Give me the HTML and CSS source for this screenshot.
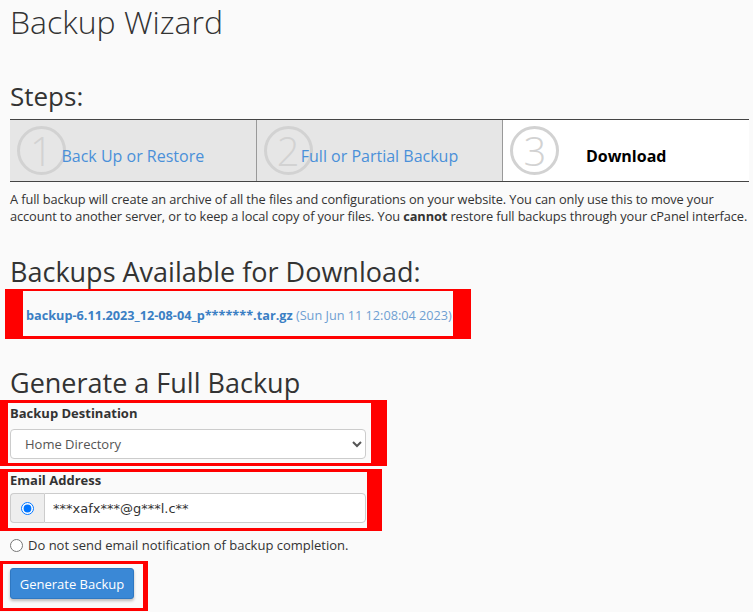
FILE: index.html
```html
<!doctype html>
<html lang="en">
<head>
    <meta charset="UTF-8">
    <title>Backup Wizard</title>
    <link rel="stylesheet" href="styles.css">
</head>
<body>
    <h1 class="page-title">Backup Wizard</h1>

    <h2 class="section-title steps-title">Steps:</h2>
    <!--步骤条-->
    <div class="steps">
        <div class="step">
            <span class="step-num">1</span>
            <a class="step-link" href="#">Back Up or Restore</a>
        </div>
        <div class="step">
            <span class="step-num">2</span>
            <a class="step-link" href="#">Full or Partial Backup</a>
        </div>
        <div class="step step-current">
            <span class="step-num">3</span>
            <span class="step-label">Download</span>
        </div>
    </div>

    <p class="intro">A full backup will create an archive of all the files and configurations on your website. You can only use this to move your account to another server, or to keep a local copy of your files. You <b>cannot</b> restore full backups through your cPanel interface.</p>

    <h2 class="section-title big-title">Backups Available for Download:</h2>
    <div class="mark mark-list">
        <a class="backup-file" href="#">backup-6.11.2023_12-08-04_p*******.tar.gz</a>
        <span class="backup-date">(Sun Jun 11 12:08:04 2023)</span>
    </div>

    <h2 class="section-title big-title gen-title">Generate a Full Backup</h2>
    <div class="mark mark-dest">
        <label class="field-label" for="dest">Backup Destination</label>
        <select class="field-select" id="dest">
            <option>Home Directory</option>
        </select>
    </div>

    <div class="mark mark-email">
        <label class="field-label" for="email">Email Address</label>
        <div class="input-group">
            <span class="input-addon"><input type="radio" name="notify" checked></span>
            <input class="field-input" id="email" type="text" value="***xafx***@g***l.c**">
        </div>
    </div>

    <label class="no-mail"><input type="radio" name="notify"> Do not send email notification of backup completion.</label>

    <div class="mark mark-btn">
        <button class="btn-primary" type="button">Generate Backup</button>
    </div>
</body>
</html>
```

FILE: styles.css
```css
body{
    margin: 0;
    padding: 0 0 0 10px;
    background: #fafafa;
    color: #333;
    font-family: "Open Sans", "Liberation Sans", sans-serif;
    font-size: 13px;
}
a{
    text-decoration: none;
}
/*标题*/
.page-title{
    margin: 0;
    padding-top: 1px;
    font-size: 32px;
    font-weight: 300;
    line-height: 42px;
}
.section-title{
    margin: 0;
    font-size: 26px;
    font-weight: 400;
    line-height: 34px;
}
.big-title{
    font-size: 27px;
}
.steps-title{
    margin-top: 36px;
    margin-bottom: 6px;
}

/*步骤条*/
.steps{
    display: flex;
    width: 739px;
    height: 61px;
    border-top: 1px solid #444;
    border-bottom: 1px solid #444;
}
.step{
    flex: 1;
    position: relative;
    display: flex;
    align-items: center;
    justify-content: center;
    background: #e6e6e6;
    border-left: 1px solid #999;
    font-size: 16px;
}
.step:first-child{
    border-left: 0;
}
.step-current{
    background: #fff;
}
/*圆圈数字,在文字下面*/
.step-num{
    position: absolute;
    left: 7px;
    top: 6px;
    width: 43px;
    height: 43px;
    border: 3px solid #d2d2d2;
    border-radius: 50%;
    color: #d2d2d2;
    font-size: 40px;
    font-weight: 300;
    line-height: 43px;
    text-align: center;
}
.step-link,
.step-label{
    position: relative;
    padding-top: 10px;
}
.step-link{
    color: #4a90d9;
}
.step-label{
    color: #000;
    font-weight: 700;
}

.intro{
    margin: 9px 0 30px;
    width: 740px;
    font-size: 12.8px;
    line-height: 17px;
    letter-spacing: -0.1px;
}

/*红框*/
.mark{
    border: 0 solid #f00;
    box-sizing: border-box;
}
.mark-list{
    margin-left: -5px;
    width: 466px;
    height: 50px;
    border-width: 2px 18px 3px 18px;
    padding: 15px 0 0 3px;
    background: #fafafa;
    font-size: 12.7px;
    white-space: nowrap;
}
.backup-file{
    color: #3b7fc4;
    font-weight: 700;
}
.backup-date{
    color: #6f9fd2;
}

.gen-title{
    margin-top: 27px;
}
.mark-dest{
    margin-left: -10px;
    width: 387px;
    height: 66px;
    border-width: 3px 16px 3px 8px;
    padding: 0 0 0 2px;
}
.mark-email{
    margin-left: -10px;
    margin-top: 3px;
    width: 382px;
    height: 62px;
    border-width: 3px 15px 3px 8px;
    padding: 0 0 0 2px;
}
.field-label{
    display: block;
    font-weight: 700;
    line-height: 20px;
    margin-bottom: 6px;
}
.mark-email .field-label{
    line-height: 16px;
    margin-bottom: 5px;
}
.field-select{
    display: block;
    width: 356px;
    height: 30px;
    padding: 0 10px;
    border: 1px solid #ccc;
    border-radius: 4px;
    background: #fff;
    color: #555;
    font-family: inherit;
    font-size: 13px;
}
.input-group{
    display: flex;
    width: 356px;
    height: 30px;
}
.input-addon{
    display: flex;
    align-items: center;
    justify-content: center;
    width: 33px;
    border: 1px solid #ccc;
    border-right: 0;
    border-radius: 4px 0 0 4px;
    background: #eee;
}
.input-addon input{
    margin: 0;
}
.field-input{
    flex: 1;
    min-width: 0;
    border: 1px solid #ccc;
    border-radius: 0 4px 4px 0;
    background: #fff;
    padding: 0 8px;
    color: #333;
    font-family: "DejaVu Sans", sans-serif;
    font-size: 13px;
}
.no-mail{
    display: flex;
    align-items: center;
    gap: 5px;
    margin-top: 6px;
    height: 16px;
}
.no-mail input{
    margin: 0;
}
.mark-btn{
    margin-left: -10px;
    margin-top: 8px;
    width: 148px;
    height: 50px;
    border-width: 3px 5px 3px 3px;
    padding: 4px 0 0 7px;
}
.btn-primary{
    width: 124px;
    height: 31px;
    border: 1px solid #2f78c2;
    border-radius: 3px;
    background: #3a88d6;
    box-shadow: 0 2px 3px rgba(0,0,0,.25);
    color: #fff;
    font-family: inherit;
    font-size: 13px;
}
```
